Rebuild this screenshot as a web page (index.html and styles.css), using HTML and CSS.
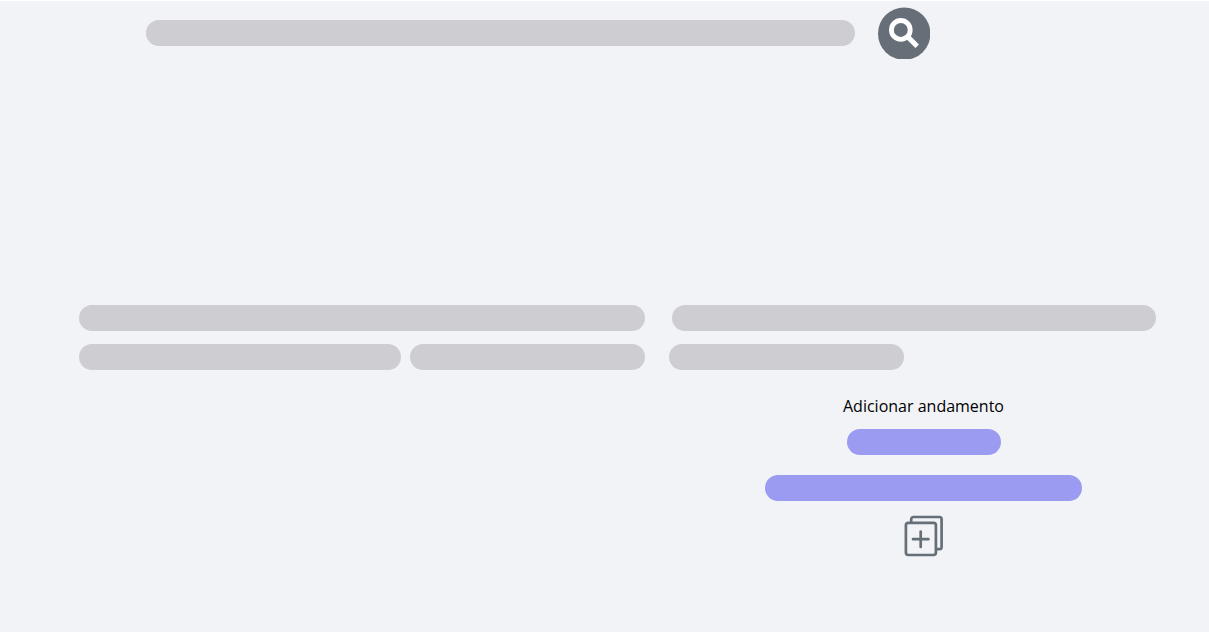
FILE: index.html
```html
<!DOCTYPE html>
<html lang="pt-BR">
<head>
<meta charset="utf-8">
<meta name="viewport" content="width=device-width, initial-scale=1">
<title>Adicionar andamento</title>
<link rel="stylesheet" href="styles.css">
</head>
<body>
<form class="search" role="search">
  <input class="field search-field" type="search" aria-label="Pesquisar">
  <button class="icon-button" type="button" aria-label="Pesquisar">
    <svg class="search-icon" viewBox="0 0 52 52" aria-hidden="true">
      <circle cx="26.2" cy="26.6" r="26.2" fill="#666f77"/>
      <circle cx="22.8" cy="22.9" r="9.4" fill="none" stroke="#fff" stroke-width="4.8"/>
      <path d="M28.8 28.9L39.2 39.2" fill="none" stroke="#fff" stroke-width="5"/>
    </svg>
  </button>
</form>
<main class="content">
  <section class="column">
    <input class="field" type="text" aria-label="Título">
    <div class="pair">
      <input class="field" type="text" aria-label="Detalhe">
      <input class="field" type="text" aria-label="Data">
    </div>
  </section>
  <section class="column">
    <div class="inset"><input class="field" type="text" aria-label="Processo"></div>
    <div class="pair-right"><input class="field" type="text" aria-label="Situação"></div>
    <form class="progress">
      <label class="progress-label" for="tipo">Adicionar andamento</label>
      <input class="field accent short" id="tipo" type="text">
      <input class="field accent long" type="text" aria-label="Descrição">
      <button class="icon-button" type="button" aria-label="Adicionar">
        <svg class="add-icon" viewBox="0 0 40 42" fill="none" stroke="#666f77" stroke-width="2.7" stroke-linecap="round" stroke-linejoin="round" aria-hidden="true">
          <path d="M7.2 6.5V4.2a2.2 2.2 0 0 1 2.2-2.2h26a2.2 2.2 0 0 1 2.2 2.2v27.8a2.2 2.2 0 0 1-2.2 2.2h-2.2"/>
          <rect x="1.9" y="7.8" width="30" height="32.2" rx="2.4"/>
          <path d="M16.7 16.5v15.4M9 24.2h15.4"/>
        </svg>
      </button>
    </form>
  </section>
</main>
</body>
</html>
```
FILE: styles.css
```css
* { box-sizing: border-box; }

body {
  margin: 0;
  min-height: 100vh;
  background: #f1f3f7;
  border-top: 1px solid #fff;
  color: #000;
  font: 16px/24px "Open Sans", "Noto Sans", sans-serif;
}

.field {
  display: block;
  width: 100%;
  min-width: 0;
  height: 26px;
  margin: 0;
  padding: 0 13px;
  border: 0;
  border-radius: 13px;
  background: #cecdd2;
  font: inherit;
  appearance: none;
}

.icon-button {
  display: block;
  flex: none;
  padding: 0;
  border: 0;
  background: none;
  cursor: pointer;
}

.icon-button svg { display: block; }

.search {
  display: flex;
  align-items: center;
  gap: 23px;
  padding: 6px 279px 0 146px;
}

.search-field { flex: 1; }

.search-icon {
  width: 52px;
  height: 52px;
}

.content {
  display: grid;
  grid-template-columns: 566fr 487fr;
  gap: 24px;
  padding: 246px 53px 40px 79px;
}

.column {
  display: flex;
  flex-direction: column;
  gap: 13px;
  min-width: 0;
}

.pair {
  display: grid;
  grid-template-columns: 322fr 235fr;
  gap: 9px;
}

.inset { padding-left: 3px; }

.pair-right {
  display: grid;
  grid-template-columns: 235fr 252fr;
}

.progress {
  display: flex;
  flex-direction: column;
  align-items: center;
  padding: 11px 0 0 22px;
}

.accent { background: #9a9bf1; }

.short {
  max-width: 154px;
  margin: 11px 0 20px;
}

.long {
  max-width: 317px;
  margin-bottom: 14px;
}

.add-icon {
  width: 40px;
  height: 42px;
}
```
